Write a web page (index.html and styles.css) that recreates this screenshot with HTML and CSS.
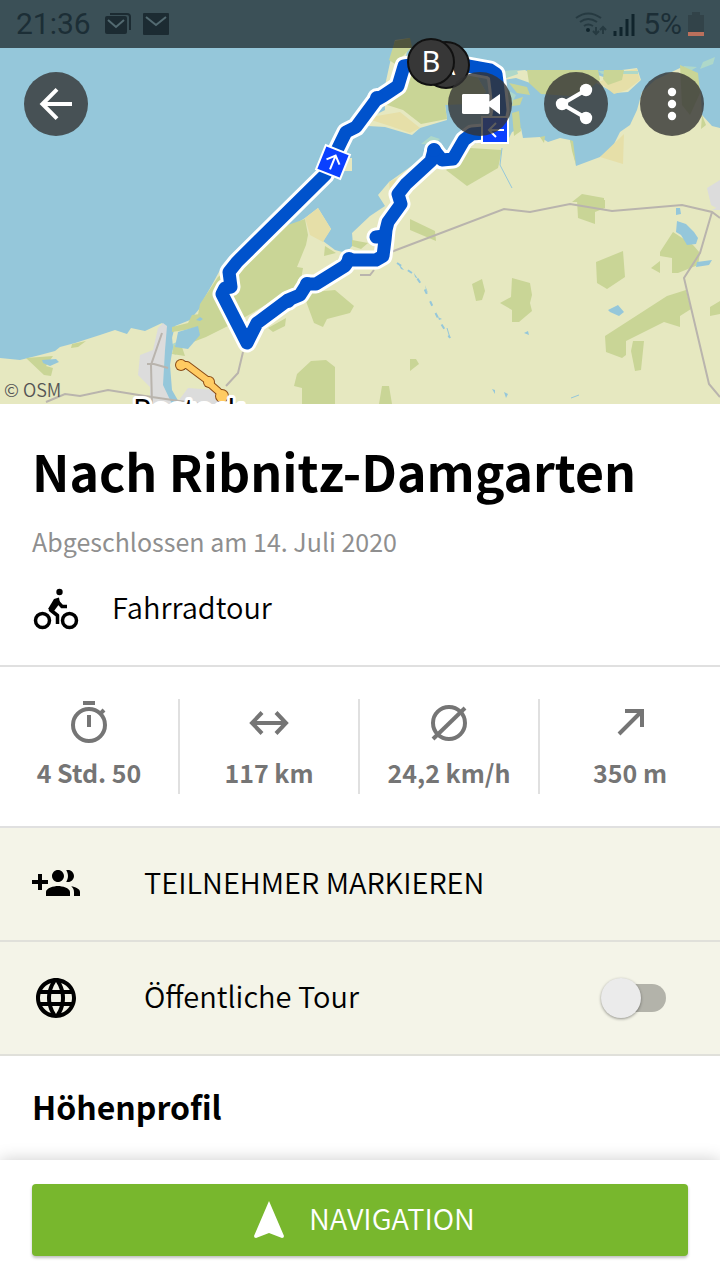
FILE: index.html
```html
<!DOCTYPE html>
<html lang="de">
<head>
  <meta charset="utf-8">
  <meta name="viewport" content="width=device-width, initial-scale=1">
  <title>Nach Ribnitz-Damgarten</title>
  <link rel="stylesheet" href="styles.css">
</head>
<body>
  <header class="map">
    <svg class="map-canvas" viewBox="0 0 720 404" role="img" aria-label="Karte der Tour">
      <rect width="720" height="404" fill="#95c7da"/>

      <!-- land -->
      <g fill="#e6e8c0">
        <path d="M0 358L20 360 40 355 55 351 60 347 75 343 100 335 115 330 127 334 131 328 145 331 162 323 168 330 172 338 175 326 190 320 200 308 205 297 213 283 220 270 235 262 305 218 318 208 331 229 323 241 335 250 346 253 353 245 352 233 370 216 385 206 378 195 389 182 420 160 480 142 506 144 512 132 521 128 523 138 540 137 548 142 560 138 570 140 573 150 576 166 600 157 612 148 620 132 630 125 637 110 642 92 655 80 680 68 697 74 701 95 702 115 712 126 720 128V404H0Z"/>
        <path d="M395 40L410 38 404 65 480 66 478 78 486 92 470 104 445 104 447 120 420 128 412 135 385 127 368 126 361 122 385 110 384 90Z"/>
        <path d="M503 72L525 70 540 78 533 84 516 78 503 80Z"/>
        <path d="M592 73L612 80 622 70 637 68 641 80 628 92 615 93 596 83Z"/>
        <path d="M341 158h11v13h-9z"/>
      </g>

      <!-- sand and reed -->
      <g fill="#e6dfa8">
        <path d="M305 218L318 208 331 229 323 242 310 235Z"/>
        <path d="M365 118L400 112 420 128 410 133 390 126Z"/>
        <path d="M599 82L620 72 637 69 640 80 627 90 614 94Z"/>
        <path d="M600 157L624 134 623 164Z"/>
        <path d="M389 182L397 178 390 194Z"/>
      </g>
      <path fill="#aed8c9" d="M703 62L715 57 713 64 700 69zM684 66l13 1-10 6-6-2zM502 71l15-1 1 4-14 5zM598 71h40v3h-36zM421 144l10-8 9 3-7 6zM504 88l12 7-4 8-10-5zM170 345l9-4 3 8-7 6z"/>

      <!-- woods -->
      <g fill="#c9d596">
        <path d="M395 41L410 38 412 47 395 64 389 60Z"/>
        <path d="M400 87L410 72 480 66 478 78 486 92 470 104 445 105 447 119 421 124 403 110 384 104Z"/>
        <path d="M527 70L598 70 600 80 588 90 570 96 541 94 529 83Z"/>
        <path d="M604 70h20l-2 10-14 5-5-6z"/>
        <path d="M509 83l18 4 3 8-13-2zM513 100l10-3-3 8-8 1zM512 113l7-2 2 20-7 5zM680 65l18 8 2 20-10 22-8-10zM702 115l4 10-5 4zM540 137l5-1-1 7zM570 140l3 1 3 24-4-14z"/>
        <path d="M446 170L470 148 502 150 498 168 467 186Z"/>
        <path d="M305 219L285 226 240 260 218 277 200 304 193 342 206 337 240 320 300 285 303 268 297 267 306 245 308 235Z"/>
        <path d="M172 327l16-4 4-8 8-1-2 13-13 3-13 2zM174 345l8 2 3 9-13-2z"/>
        <path d="M303 293L335 290 354 306 350 313 327 319 323 327 314 323Z"/>
        <path d="M268 328l18-10-1 8-12 6zM325 246l11 7-12 3zM352 240l16 3-7 6-9-3z"/>
        <path d="M26 358L53 356 46 366 53 368 51 376 44 375ZM72 344l14-3-8 6-7 1z"/>
        <path d="M297 374L311 361 326 360 335 367V404H302L302 388 294 386Z"/>
        <path d="M410 219l25 12 1 10-26-11zM577 200h28v8l-10 4v12l-17-6z"/>
        <path d="M572 202l10-8 22 4v4z"/>
        <path d="M472 284l10-5 3 12-3 9-6 1zM512 278l18 5 2 12-2 8 2 8-13 11h-7v-12l-12-7 11-6z"/>
        <path d="M596 262l27-11 2 26-18 12-10-6zM660 252l13-20 20 13 7 8-2 12-20 8h-6v-15l-12-2zM651 268l9-7v12z"/>
        <path d="M605 336L667 296 686 290 691 309 680 316V327L664 322 626 341 626 355 622 358 606 352Z"/>
        <path d="M633 341h11l-3 29-6 1-4-20zM710 307l10-6v13l-10 2zM410 359l6 0 3 5-9 7zM382 386h7l3 18h-13z"/>
      </g>

      <!-- towns -->
      <g fill="#dcdcdc">
        <path d="M158 328L163 323 167 326 168 350 164 365 165 385 180 404H150V387L138 375 140 355 153 350Z"/>
        <path d="M176 404L188 388 215 390 225 404ZM707 188l13-8v30l-9-5zM712 210l8-4v4z"/>
      </g>

      <!-- rivers and lakes -->
      <g fill="#95c7da">
        <path d="M167 326L171 327 173 347 170 365 172 390 180 404H172L163 385 165 350Z"/>
        <path d="M178 332l20-6 2 9-12 14-13-2z"/>
        <path d="M42 360l14-1 3 3-9 4-7-3zM677 221l9 3 8 8 4 6-2 6-9 1-6-10-5-3zM676 208h4l1 6-5 1zM697 262l15-2-3 5-13 2zM608 310l10-5 6 7-5 4-9-4zM200 317l3 2-3 2-4-1zM398 263l6 7-3-1zM414 273l4 6-3-2zM425 285l3 8-2-3zM438 317l4 2-3 1zM524 333l4-2 1 4zM504 392l4 2-2 4zM492 389l3 1v4z"/>
      </g>
      <path fill="none" stroke="#95c7da" stroke-width="2" stroke-dasharray="5 8" d="M397 263L415 275 425 290 436 314 440 322 450 338"/>
      <path fill="none" stroke="#95c7da" d="M502 148L500 165 512 188M447 328l3 10M571 398l8-3"/>

      <!-- roads -->
      <g fill="none" stroke="#b9b4ad" stroke-width="2">
        <path d="M391 252L504 209 530 212 570 204 612 211 682 205 712 212 720 218M712 212L700 253 684 278 709 384 720 397"/>
        <path d="M243 352L238 373 226 386M360 275l10 0 4-5M162 333L151 365 152 404M147 364l7 0 14 4M46 402L65 394 80 396 108 390 145 396 200 404"/>
      </g>

      <!-- motorway -->
      <path class="motorway-edge" d="M181 365L187 365 207 380 210 384 218 391 223 396"/>
      <g fill="#8a4a14"><circle cx="181" cy="365" r="6"/><circle cx="209" cy="382" r="6"/><circle cx="222" cy="396" r="7"/></g>
      <path class="motorway" d="M181 365L187 365 207 380 210 384 218 391 223 396"/>
      <g fill="#ffcb62"><circle cx="181" cy="365" r="5"/><circle cx="209" cy="382" r="5"/><circle cx="222" cy="396" r="6"/></g>

      <!-- recorded track -->
      <g class="track track-edge">
        <path d="M445 66L468 66 490 70 496 74 498 90 500 110 496 132 472 134 464 140 453 159 442 160 434 150 431 161 406 184 398 194 401 204 388 222 386 230 385 240 383 256 376 260 349 260 345 266 316 284 307 284 300 295 288 300 257 323 247 343 222 294 225 288 231 287 229 272 237 262 325 175 342 140 346 132 356 127 376 100 383 96 398 86 404 66 430 62M376 237L384 236"/>
      </g>
      <g fill="#fff">
        <circle cx="349" cy="259" r="10"/><circle cx="307" cy="284" r="10"/><circle cx="288" cy="301" r="10"/><circle cx="434" cy="150" r="10"/><circle cx="377" cy="98" r="10"/>
      </g>
      <g class="track">
        <path d="M445 66L468 66 490 70 496 74 498 90 500 110 496 132 472 134 464 140 453 159 442 160 434 150 431 161 406 184 398 194 401 204 388 222 386 230 385 240 383 256 376 260 349 260 345 266 316 284 307 284 300 295 288 300 257 323 247 343 222 294 225 288 231 287 229 272 237 262 325 175 342 140 346 132 356 127 376 100 383 96 398 86 404 66 430 62M376 237L384 236"/>
      </g>
      <g fill="#0052cc">
        <circle cx="349" cy="259" r="7"/><circle cx="307" cy="284" r="7"/><circle cx="288" cy="301" r="7"/><circle cx="434" cy="150" r="7"/><circle cx="377" cy="98" r="7"/>
      </g>

      <!-- direction markers -->
      <g class="direction" transform="translate(333 162) rotate(22)">
        <rect x="-13" y="-13" width="26" height="26"/>
        <path d="M0 8V-7M-7 0L0 -7 7 0"/>
      </g>
      <g class="direction" transform="translate(495 130) rotate(-90)">
        <rect x="-13" y="-13" width="26" height="26"/>
        <path d="M0 9V-6M-7 1L0 -6 7 1"/>
      </g>

      <text class="place" x="133" y="421">Rostock</text>
      <text class="copyright" x="4" y="397">© OSM</text>
    </svg>

    <div class="status-bar">
      <div class="status-group">
        <span class="clock">21:36</span>
        <svg width="26" height="24" viewBox="0 0 26 24">
          <path fill="none" stroke="#1c2b32" stroke-width="2" d="M5 2H22Q25 2 25 5V18"/>
          <rect y="4" width="22" height="18" rx="2" fill="#1c2b32"/>
          <path fill="none" stroke="#536a71" stroke-width="2" d="M3 8L11 15 19 8"/>
        </svg>
        <svg width="26" height="24" viewBox="0 0 26 24">
          <rect width="26" height="22" y="1" rx="1" fill="#1c2b32"/>
          <path fill="none" stroke="#536a71" stroke-width="2" d="M3 5L13 13 23 5"/>
        </svg>
      </div>
      <div class="status-group status-right">
        <svg width="32" height="24" viewBox="0 0 32 24">
          <g fill="none" stroke="#263a41" stroke-width="2">
            <path d="M1 6Q13 -3 26 6M5 10Q13 4 22 10M9 14Q13 11 18 14"/>
            <path d="M21 15V22M18 19L21 22 24 19M28 22V15M25 18L28 15 31 18"/>
          </g>
          <circle cx="13" cy="18" r="2" fill="#10242c"/>
        </svg>
        <svg width="22" height="24" viewBox="0 0 22 24">
          <path stroke="#10242c" stroke-width="3" d="M2 19V24M8 15V24M14 7V24M20 2V24"/>
        </svg>
        <span class="battery-level">5%</span>
        <svg width="16" height="24" viewBox="0 0 16 24">
          <path fill="#324349" d="M4 0H12V3H16V20H0V3H4Z"/>
          <rect y="20" width="16" height="4" fill="#bb705c"/>
        </svg>
      </div>
    </div>

    <svg class="pins" viewBox="0 0 720 404" aria-hidden="true">
      <g class="pin">
        <circle cx="446" cy="65" r="23"/>
        <text x="446" y="75">A</text>
        <circle cx="431" cy="62" r="23"/>
        <text x="431" y="72">B</text>
      </g>
    </svg>

    <nav class="toolbar">
      <button type="button" class="round-button" aria-label="Zurück">
        <svg width="48" height="48" viewBox="0 0 24 24"><path fill="none" stroke="#fff" stroke-width="2" d="M20 12H5M12.500 4.700L5.200 12 12.500 19.300"/></svg>
      </button>
      <div class="toolbar-actions">
        <button type="button" class="round-button" aria-label="Video">
          <svg width="48" height="48" viewBox="0 0 24 24"><path fill="#fff" d="M16.700 10.800V7.700c0-.5-.4-.7-.8-.7H3.800c-.5 0-.8.3-.8.700v8.600c0 .5.300.700.800.700h12.100c.5 0 .8-.3.800-.7v-3.100l5.300 4V7z"/></svg>
        </button>
        <button type="button" class="round-button" aria-label="Teilen">
          <svg width="48" height="48" viewBox="0 0 24 24"><path stroke="#fff" stroke-width="2" fill="none" d="M17 5L5 12 17 19"/><g fill="#fff"><circle cx="17" cy="5" r="3.100"/><circle cx="5" cy="12" r="3.100"/><circle cx="17" cy="19" r="3.100"/></g></svg>
        </button>
        <button type="button" class="round-button" aria-label="Mehr">
          <svg width="48" height="48" viewBox="0 0 24 24" fill="#fff"><circle cx="12" cy="6" r="2.100"/><circle cx="12" cy="12" r="2.100"/><circle cx="12" cy="18" r="2.100"/></svg>
        </button>
      </div>
    </nav>
  </header>

  <main>
    <section class="summary">
      <h1>Nach Ribnitz-Damgarten</h1>
      <p class="date">Abgeschlossen am 14. Juli 2020</p>
      <p class="sport">
        <svg width="48" height="48" viewBox="0 -6 48 48">
          <g fill="none" stroke="#000" stroke-width="3.500">
            <circle cx="10.500" cy="32.500" r="7"/>
            <circle cx="37.500" cy="32.500" r="7"/>
          </g>
          <circle cx="27.500" cy="4" r="3.200"/>
          <path fill="none" stroke="#000" stroke-width="3.500" stroke-linejoin="round" d="M35 18.500H30L25 13 18.500 22 25.500 27.500V36"/>
          <path d="M22 11L27 9.500 28 15 22 23 16 21Z"/>
        </svg>
        Fahrradtour
      </p>
    </section>

    <ul class="stats">
      <li>
        <svg width="48" height="48" viewBox="0 0 48 48"><g fill="none" stroke="#757575" stroke-width="4"><circle cx="24" cy="26" r="16"/><path d="M18 4H30M24 16V28M35 15L39 11"/></g></svg>
        <span>4 Std. 50</span>
      </li>
      <li>
        <svg width="48" height="48" viewBox="0 0 48 48"><path fill="none" stroke="#757575" stroke-width="4" d="M7 24H41M17 13.500L7 24 17 34.500M31 13.500L41 24 31 34.500"/></svg>
        <span>117 km</span>
      </li>
      <li>
        <svg width="48" height="48" viewBox="0 0 48 48"><g fill="none" stroke="#757575" stroke-width="4"><circle cx="24" cy="24" r="16"/><path d="M8 40L40 9"/></g></svg>
        <span>24,2 km/h</span>
      </li>
      <li>
        <svg width="48" height="48" viewBox="0 0 48 48"><path fill="none" stroke="#757575" stroke-width="4" d="M13 35L36 12M19 12H36V28"/></svg>
        <span>350 m</span>
      </li>
    </ul>

    <button type="button" class="row">
      <svg width="48" height="48" viewBox="0 0 24 24"><path d="M8 10H5V7H3v3H0v2h3v3h2v-3h3v-2zm10 1c1.660 0 2.990-1.340 2.990-3S19.660 5 18 5c-.32 0-.63.05-.91.14.57.81.9 1.790.9 2.860s-.34 2.040-.9 2.860c.28.090.59.140.91.140zm-5 0c1.660 0 2.990-1.340 2.990-3S14.660 5 13 5c-1.660 0-3 1.340-3 3s1.340 3 3 3zm6.620 2.160c.83.730 1.380 1.660 1.380 2.840v2h3v-2c0-1.540-2.370-2.490-4.380-2.840zM13 13c-2 0-6 1-6 3v2h12v-2c0-2-4-3-6-3z"/></svg>
      <span class="label">TEILNEHMER MARKIEREN</span>
    </button>

    <label class="row" for="publicTour">
      <svg width="48" height="48" viewBox="0 0 24 24"><path d="M11.990 2C6.470 2 2 6.480 2 12s4.470 10 9.990 10C17.520 22 22 17.520 22 12S17.520 2 11.990 2zm6.930 6h-2.950c-.32-1.250-.78-2.450-1.380-3.560 1.840.63 3.370 1.910 4.330 3.560zM12 4.040c.83 1.200 1.480 2.530 1.910 3.960h-3.820c.43-1.430 1.080-2.760 1.910-3.960zM4.260 14C4.100 13.360 4 12.690 4 12s.1-1.360.26-2h3.380c-.08.66-.14 1.320-.14 2s.06 1.340.14 2H4.260zm.82 2h2.950c.32 1.250.78 2.450 1.380 3.560-1.840-.63-3.370-1.900-4.330-3.560zm2.950-8H5.080c.96-1.660 2.490-2.930 4.330-3.560C8.810 5.550 8.350 6.750 8.030 8zM12 19.960c-.83-1.200-1.480-2.530-1.910-3.960h3.820c-.43 1.430-1.080 2.760-1.910 3.960zM14.340 14H9.660c-.09-.66-.16-1.320-.16-2s.07-1.350.16-2h4.680c.09.650.16 1.320.16 2s-.07 1.340-.16 2zm.25 5.560c.6-1.110 1.060-2.310 1.380-3.560h2.950c-.96 1.650-2.490 2.930-4.330 3.560zM16.360 14c.08-.66.14-1.320.14-2s-.06-1.340-.14-2h3.380c.16.640.26 1.310.26 2s-.1 1.360-.26 2h-3.380z"/></svg>
      <span class="label">Öffentliche Tour</span>
      <input type="checkbox" class="switch" id="publicTour">
    </label>

    <section class="profile">
      <h2>Höhenprofil</h2>
    </section>
  </main>

  <footer>
    <button type="button" class="navigate">
      <svg width="32" height="40" viewBox="0 0 32 40"><path fill="#fff" d="M16 1L31 36Q31 38 29 38L16 33 3 38Q1 38 1 36Z"/></svg>
      <span class="label">NAVIGATION</span>
    </button>
  </footer>
</body>
</html>
```
FILE: styles.css
```css
* {
  box-sizing: border-box;
}

body {
  display: flex;
  flex-direction: column;
  min-height: 100vh;
  margin: 0;
  font-family: "Noto Sans CJK SC", "Noto Sans", sans-serif;
  font-size: 29px;
  font-weight: 350;
  line-height: 40px;
  color: #000;
  background-color: #fff;
}

h1, h2, p, ul {
  margin: 0;
  padding: 0;
}

svg {
  display: block;
  flex: none;
}

button {
  border: none;
  font: inherit;
  color: inherit;
  cursor: pointer;
}

/* Map */
.map {
  position: relative;
}

.map-canvas {
  width: 100%;
}

.track {
  fill: none;
  stroke: #0052cc;
  stroke-width: 13px;
  stroke-linecap: round;
  stroke-linejoin: round;
}

.track-edge {
  stroke: #fff;
  stroke-width: 19px;
}

.motorway,
.motorway-edge {
  fill: none;
  stroke: #ffcb62;
  stroke-width: 6px;
  stroke-linecap: round;
  stroke-linejoin: round;
}

.motorway-edge {
  stroke: #8a4a14;
  stroke-width: 8px;
}

.direction rect {
  fill: #0a40ff;
  stroke: #fff;
  stroke-width: 2px;
}

.direction path {
  fill: none;
  stroke: #fff;
  stroke-width: 2px;
}

.place {
  font-family: "Noto Sans", sans-serif;
  font-size: 30px;
  font-weight: normal;
  stroke: #fff;
  stroke-width: 6px;
  stroke-linejoin: round;
  paint-order: stroke;
}

.copyright {
  font-size: 18px;
  fill: #555;
}

.pins {
  position: absolute;
  top: 0;
  left: 0;
  width: 100%;
}

.pin circle {
  fill: #373737;
  stroke: #111;
  stroke-width: 2px;
}

.pin text {
  font-family: "Noto Sans", sans-serif;
  font-size: 29px;
  font-weight: normal;
  fill: #fff;
  text-anchor: middle;
}

.status-bar {
  position: absolute;
  top: 0;
  left: 0;
  right: 0;
  display: flex;
  justify-content: space-between;
  align-items: center;
  height: 48px;
  padding: 0 16px;
  font-family: Roboto, sans-serif;
  font-size: 30px;
  font-weight: normal;
  color: #1c2e36;
  background-color: rgba(0, 0, 0, 0.6);
}

.status-group {
  display: flex;
  align-items: center;
  gap: 12px;
}

.status-right {
  gap: 6px;
}

.clock {
  margin-right: 2px;
}

.battery-level {
  margin-left: 2px;
}

.toolbar {
  position: absolute;
  top: 72px;
  left: 24px;
  right: 16px;
  display: flex;
  justify-content: space-between;
}

.toolbar-actions {
  display: flex;
  gap: 32px;
}

.round-button {
  display: flex;
  justify-content: center;
  align-items: center;
  width: 64px;
  height: 64px;
  padding: 0;
  border-radius: 50%;
  background-color: rgba(51, 51, 51, 0.8);
}

/* Tour summary */
.summary {
  padding: 30px 32px 35px;
  border-bottom: 2px solid #e0e0e0;
}

h1 {
  font-size: 50px;
  line-height: 72px;
}

.date {
  margin-top: 15px;
  font-size: 25px;
  font-weight: normal;
  color: #8f8f8f;
}

.sport {
  display: flex;
  align-items: center;
  gap: 32px;
  margin-top: 21px;
}

/* Stats */
.stats {
  display: grid;
  grid-template-columns: repeat(4, 1fr);
  padding: 32px 0;
  list-style: none;
  border-bottom: 2px solid #e0e0e0;
}

.stats li {
  display: flex;
  flex-direction: column;
  align-items: center;
  gap: 5px;
  min-height: 95px;
  font-size: 25px;
  font-weight: bold;
  color: #757575;
  border-right: 2px solid #e0e0e0;
}

.stats li:last-child {
  border-right: none;
}

/* Option rows */
.row {
  display: flex;
  align-items: center;
  gap: 64px;
  width: 100%;
  padding: 32px 54px 32px 32px;
  min-height: 114px;
  text-align: left;
  background-color: #f4f4e8;
  border-bottom: 2px solid #e0e0da;
}

.label {
  padding-bottom: 6px;
}

.switch {
  position: relative;
  width: 56px;
  height: 28px;
  margin: 0 0 0 auto;
  appearance: none;
  border-radius: 14px;
  background-color: #b3b3aa;
}

.switch::before {
  content: "";
  position: absolute;
  top: -6px;
  left: -9px;
  width: 40px;
  height: 40px;
  border-radius: 50%;
  background-color: #ebebeb;
  box-shadow: 0 1px 3px rgba(0, 0, 0, 0.4);
}

.switch:checked {
  background-color: #b4d68c;
}

.switch:checked::before {
  left: 25px;
  background-color: #78b72d;
}

.profile {
  padding: 30px 32px;
}

h2 {
  font-size: 32px;
  line-height: 40px;
}

/* Bottom bar */
footer {
  position: sticky;
  bottom: 0;
  margin-top: auto;
  padding: 24px 32px;
  background-color: #fff;
  box-shadow: 0 0 16px rgba(0, 0, 0, 0.2);
}

.navigate {
  display: flex;
  justify-content: center;
  align-items: center;
  gap: 24px;
  width: 100%;
  height: 72px;
  padding: 0 0 0 8px;
  color: #fff;
  background-color: #78b72d;
  border-radius: 4px;
  box-shadow: 0 2px 3px rgba(0, 0, 0, 0.25);
}
```
